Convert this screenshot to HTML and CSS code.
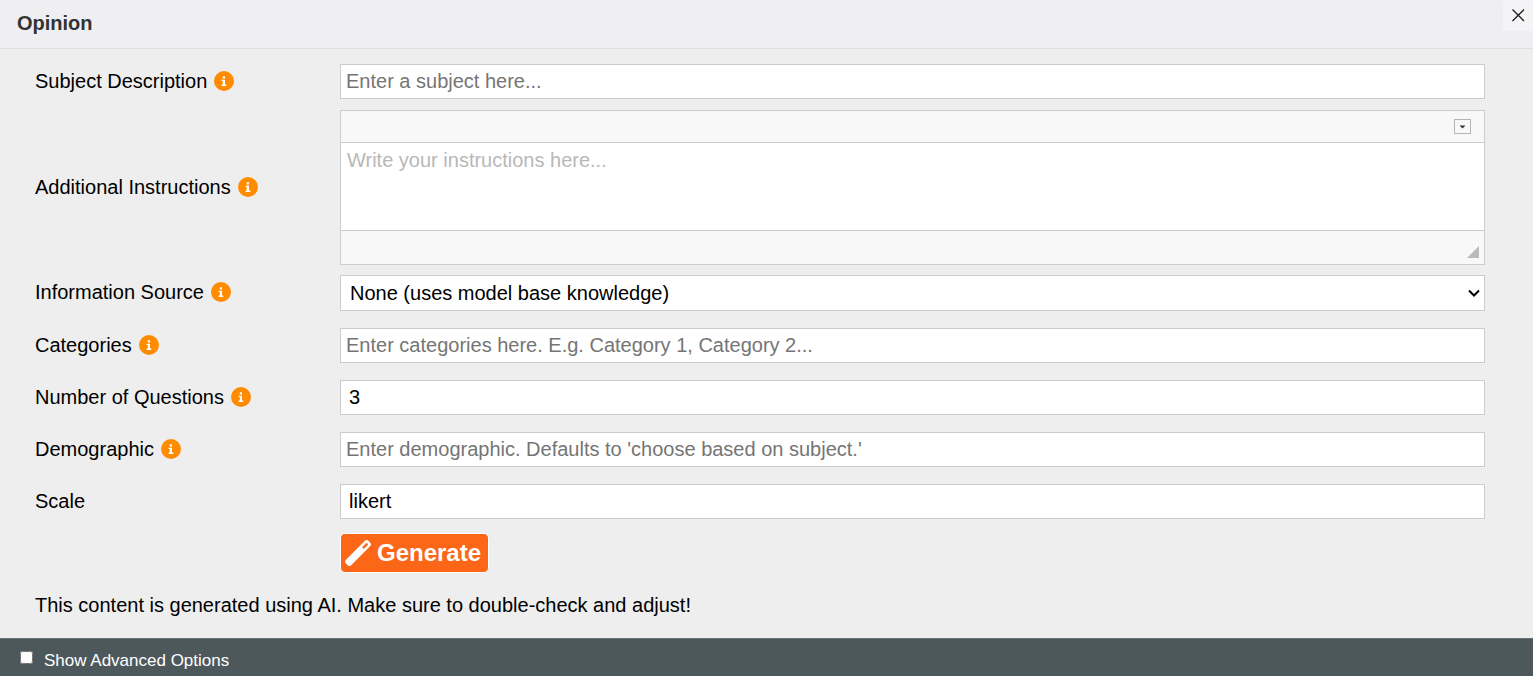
FILE: index.html
```html
<!DOCTYPE html>
<html lang="en">
<head>
<meta charset="utf-8">
<meta name="viewport" content="width=device-width, initial-scale=1">
<title>Opinion</title>
<link rel="stylesheet" href="styles.css">
</head>
<body>
<svg class="sprite" aria-hidden="true">
  <symbol id="info" viewBox="0 0 20 20">
    <circle cx="10" cy="10" r="10" fill="#ff8c00"/>
    <path fill="#fff" d="M8.800 5.200h2.200v2.200H8.800zM7.600 8.700H11v4.900h1.300V15H7.600v-1.400h1.200v-3.500H7.600z"/>
  </symbol>
</svg>
<header class="titlebar">
  <h1 class="title">Opinion</h1>
  <button class="close" type="button" aria-label="Close">
    <svg width="14" height="14" viewBox="0 0 14 14"><path d="M1.500 1.500l11.500 11.500M13 1.500l-11.500 11.500" stroke="#1a1a1a" stroke-width="1.300" fill="none"/></svg>
  </button>
</header>
<main>
  <form class="form">
    <div class="row">
      <div class="caption"><label for="subject">Subject Description</label><svg class="info"><use href="#info"/></svg></div>
      <input class="field" id="subject" type="text" placeholder="Enter a subject here...">
    </div>
    <div class="row row-editor">
      <div class="caption"><label for="instructions">Additional Instructions</label><svg class="info"><use href="#info"/></svg></div>
      <div class="editor">
        <div class="editor-top">
          <button class="collapse" type="button" aria-label="Toolbar"><svg width="7" height="4" viewBox="0 0 7 4"><path d="M.5.5h6L3.500 3.500z" fill="#333"/></svg></button>
        </div>
        <textarea class="editor-text" id="instructions" placeholder="Write your instructions here..."></textarea>
        <div class="editor-bottom">
          <svg width="12" height="12" viewBox="0 0 12 12"><path d="M12 0v12H0z" fill="#bababa"/></svg>
        </div>
      </div>
    </div>
    <div class="row row-select">
      <div class="caption"><label for="source">Information Source</label><svg class="info"><use href="#info"/></svg></div>
      <div class="select-wrap">
        <select class="field select" id="source"><option>None (uses model base knowledge)</option></select>
        <svg class="chevron" width="12" height="8" viewBox="0 0 12 8"><path d="M1 1.500l5 5 5-5" fill="none" stroke="#000" stroke-width="2"/></svg>
      </div>
    </div>
    <div class="row">
      <div class="caption"><label for="categories">Categories</label><svg class="info"><use href="#info"/></svg></div>
      <input class="field" id="categories" type="text" placeholder="Enter categories here. E.g. Category 1, Category 2...">
    </div>
    <div class="row">
      <div class="caption"><label for="count">Number of Questions</label><svg class="info"><use href="#info"/></svg></div>
      <input class="field filled" id="count" type="text" value="3">
    </div>
    <div class="row">
      <div class="caption"><label for="demographic">Demographic</label><svg class="info"><use href="#info"/></svg></div>
      <input class="field" id="demographic" type="text" placeholder="Enter demographic. Defaults to 'choose based on subject.'">
    </div>
    <div class="row">
      <div class="caption"><label for="scale">Scale</label></div>
      <input class="field filled" id="scale" type="text" value="likert">
    </div>
    <div class="row row-action">
      <span></span>
      <button class="generate" type="button">
        <svg width="26" height="26" viewBox="0 0 26 26"><g transform="rotate(-45 13 13)"><path fill="#fff" fill-rule="evenodd" d="M-.2 9.200H26.200Q29 9.200 29 12V14Q29 16.800 26.200 16.800H-.2Q-3 16.800-3 14V12Q-3 9.200-.2 9.200zM20 11.800V14.200H26Q27.200 13 26 11.800z"/></g></svg>
        <span>Generate</span>
      </button>
    </div>
    <p class="note">This content is generated using AI. Make sure to double-check and adjust!</p>
  </form>
</main>
<footer class="footer">
  <input class="check" id="advanced" type="checkbox">
  <label for="advanced">Show Advanced Options</label>
</footer>
</body>
</html>
```
FILE: styles.css
```css
* { box-sizing: border-box; }
body {
  margin: 0;
  min-height: 100vh;
  display: flex;
  flex-direction: column;
  background: #eee;
  color: #000;
  font: 20px/24px "Liberation Sans", Arial, sans-serif;
}
button, input, select, textarea { font: inherit; color: inherit; margin: 0; }
.sprite { position: absolute; width: 0; height: 0; }
.titlebar {
  display: flex;
  justify-content: space-between;
  align-items: flex-start;
  height: 49px;
  background: #efeff1;
  border-bottom: 1px solid #dedede;
}
.title { margin: 0; padding: 11px 17px; font-size: 20px; line-height: 24px; color: #333; }
.close {
  display: flex;
  align-items: center;
  justify-content: center;
  width: 30px;
  height: 31px;
  padding: 0 0 2px;
  border: 0;
  border-radius: 2px;
  background: #f4f4f6;
}
main { flex: 1; }
.form { padding: 7px 48px 0 35px; }
.row {
  display: grid;
  grid-template-columns: 305px 1fr;
  align-items: center;
  padding: 8px 0 9px;
}
.row-editor { padding: 2px 0; }
.row-action { padding: 5px 0 7px; }
.caption { display: flex; align-items: center; gap: 7px; padding-bottom: 2px; }
.info { width: 20px; height: 20px; }
.field {
  width: 100%;
  height: 35px;
  padding: 0 5px;
  border: 1px solid #ccc;
  border-radius: 0;
  background: #fff;
}
.field::placeholder { color: #757575; opacity: 1; }
.filled { padding: 0 8px; }
.select-wrap { display: grid; align-items: center; }
.select-wrap > * { grid-area: 1 / 1; }
.select { height: 36px; padding: 0 9px; appearance: none; }
.chevron { justify-self: end; margin-right: 5px; pointer-events: none; }
.editor { border: 1px solid #ccc; background: #f8f8f8; }
.editor-top {
  display: flex;
  justify-content: flex-end;
  align-items: center;
  height: 32px;
  padding-right: 13px;
  border-bottom: 1px solid #ccc;
}
.collapse {
  display: flex;
  align-items: center;
  justify-content: center;
  width: 17px;
  height: 15px;
  padding: 0;
  border: 1px solid #b6b6b6;
  background: #f8f8f8;
}
.editor-text {
  display: block;
  width: 100%;
  height: 87px;
  padding: 5px 6px;
  border: 0;
  background: #fff;
  resize: none;
}
.editor-text::placeholder { color: #b8b8b8; opacity: 1; }
.editor-bottom {
  display: flex;
  justify-content: flex-end;
  align-items: flex-end;
  height: 34px;
  padding: 0 5px 6px;
  border-top: 1px solid #ccc;
}
.generate {
  justify-self: start;
  display: flex;
  align-items: center;
  gap: 6px;
  height: 40px;
  padding: 0 7px 0 4px;
  border: 1px solid #fff;
  border-radius: 5px;
  background: #fb6716;
  color: #fff;
  font-size: 24px;
  font-weight: bold;
}
.note { margin: 0; padding: 13px 0 15px; }
.footer {
  display: flex;
  align-items: center;
  gap: 11px;
  height: 38px;
  padding: 0 20px;
  border-top: 1px solid #6f7678;
  background: #4d585d;
  color: #fff;
  font-size: 17px;
}
.footer label { padding-top: 6px; }
.check { width: 13px; height: 13px; }
```
